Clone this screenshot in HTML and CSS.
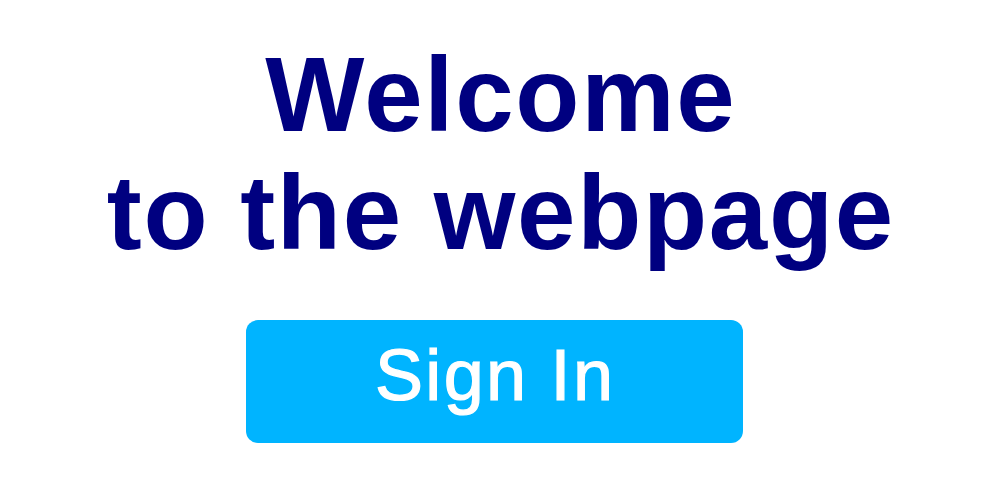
FILE: index.html
```html
<!DOCTYPE html>
<html lang="en">
<head>
<meta charset="utf-8">
<title>Welcome</title>
<link rel="stylesheet" href="styles.css">
</head>
<body>
<main class="page">
  <h1 class="title">Welcome<br>to the webpage</h1>
  <button class="signin" type="button">Sign In</button>
</main>
</body>
</html>
```
FILE: styles.css
```css
html, body {
  margin: 0;
  padding: 0;
  background: #ffffff;
}
.page {
  width: 1000px;
  height: 500px;
  display: flex;
  flex-direction: column;
  align-items: center;
  font-family: "Liberation Sans", Arial, sans-serif;
}
.title {
  margin: 36px 0 0 0;
  padding-left: 1.7px;
  font-size: 105px;
  line-height: 118px;
  font-weight: bold;
  letter-spacing: 1.7px;
  color: #000080;
  text-align: center;
}
.signin {
  box-sizing: border-box;
  margin: 48px 12px 0 0;
  width: 497px;
  height: 123px;
  padding: 0 0 13px 2.3px;
  border: none;
  border-radius: 12px;
  background: #00b4ff;
  color: #ffffff;
  font-family: "Liberation Sans", Arial, sans-serif;
  font-size: 72px;
  font-weight: normal;
  letter-spacing: 2.3px;
  -webkit-text-stroke: 1.2px #ffffff;
}
```
